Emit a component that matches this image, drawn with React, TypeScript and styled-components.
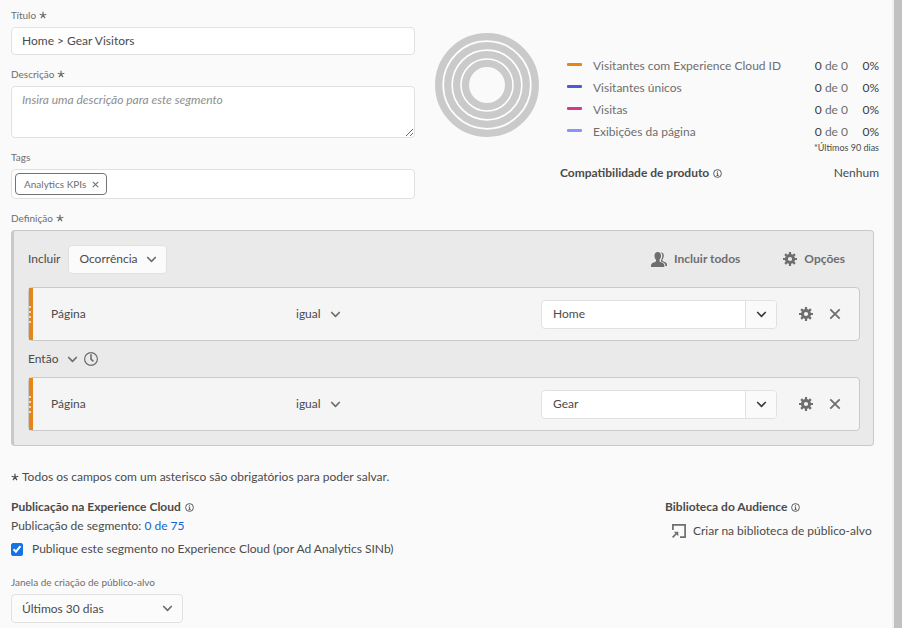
import React, { useState } from 'react';
import styled, { createGlobalStyle } from 'styled-components';

const GlobalStyle = createGlobalStyle`
  *, *::before, *::after { box-sizing: border-box; }
  body {
    margin: 0;
    background: #fafafa;
    color: #4b4b4b;
    font-family: Lato, "Liberation Sans", sans-serif;
    font-size: 12px;
    line-height: 16px;
  }
  button, input, select, textarea { font: inherit; color: inherit; margin: 0; }
`;

const Shell = styled.div`
  display: flex;
  min-height: 100vh;
`;

const Main = styled.main`
  flex: 1;
  min-width: 0;
  padding: 8px 13px 5px 11px;
`;

const ScrollThumb = styled.div`
  flex: none;
  width: 10px;
  background: #c1c1c1;
  border-left: 2px solid #f0f0f0;
`;

const Top = styled.div`
  display: grid;
  grid-template-columns: minmax(0, 1fr) 444px;
  gap: 20px;
`;

const Fields = styled.div`
  display: flex;
  flex-direction: column;
  gap: 12px;
`;

const Field = styled.div`
  display: flex;
  flex-direction: column;
  gap: 5px;
`;

const Label = styled.label`
  display: flex;
  align-items: center;
  gap: 3px;
  font-size: 10px;
  line-height: 14px;
  color: #6e6e6e;
`;

const TextInput = styled.input`
  width: 100%;
  height: 28px;
  padding: 0 10px 1px;
  border: 1px solid #e1e1e1;
  border-radius: 4px;
  background: #fff;
`;

const TextArea = styled.textarea`
  display: block;
  width: 100%;
  height: 52px;
  padding: 5px 10px;
  border: 1px solid #e1e1e1;
  border-radius: 4px;
  background: #fff;
  resize: vertical;
  &::placeholder { color: #8e8e8e; font-style: italic; opacity: 1; }
`;

const TagBox = styled.div`
  display: flex;
  align-items: center;
  height: 30px;
  padding: 0 3px;
  border: 1px solid #e1e1e1;
  border-radius: 4px;
  background: #fff;
`;

const Tag = styled.span`
  display: flex;
  align-items: center;
  gap: 6px;
  height: 22px;
  padding: 0 7px 0 8px;
  border: 1px solid #747474;
  border-radius: 4px;
  font-size: 10px;
  color: #6e6e6e;
  white-space: nowrap;
`;

const TagInput = styled.input`
  flex: 1;
  min-width: 0;
  border: 0;
  outline: 0;
  background: transparent;
`;

const IconButton = styled.button`
  display: inline-flex;
  align-items: center;
  justify-content: center;
  padding: 0;
  border: 0;
  background: none;
  color: #6e6e6e;
  cursor: pointer;
`;

const Stats = styled.section`
  display: grid;
  grid-template-columns: 104px minmax(0, 1fr);
  gap: 21px;
  padding-top: 25px;
  align-items: start;
`;

const StatsInfo = styled.div`
  padding-top: 22px;
`;

const Legend = styled.table`
  width: 100%;
  border-collapse: collapse;
  color: #6e6e6e;
  th, td { height: 22px; padding: 0; font-weight: 400; text-align: left; white-space: nowrap; }
`;

const SwatchCell = styled.td`
  width: 33px;
  && { padding-left: 7px; }
`;

const Swatch = styled.span<{ $color: string }>`
  display: block;
  width: 15px;
  height: 3px;
  border-radius: 1px;
  margin-bottom: 3px;
  background: ${(p) => p.$color};
`;

const CountCell = styled.td`
  && { text-align: right; }
`;

const Strong = styled.span`
  color: #3c3c3c;
`;

const PercentCell = styled.td`
  width: 31px;
  color: #3c3c3c;
  && { text-align: right; }
`;

const Footnote = styled.p`
  margin: 0;
  font-size: 9px;
  line-height: 10px;
  text-align: right;
`;

const Compatibility = styled.div`
  display: flex;
  justify-content: space-between;
  margin-top: 12px;
`;

const Heading = styled.h2`
  display: flex;
  align-items: center;
  gap: 4px;
  margin: 0;
  font-size: 12px;
  line-height: 16px;
  font-weight: 700;
  white-space: nowrap;
`;

const DefinitionField = styled(Field)`
  margin: 12px 5px 0 0;
`;

const Definition = styled.section`
  padding: 14px 13px 14px 14px;
  border: 1px solid #c9c9c9;
  border-left-width: 3px;
  border-radius: 4px;
  background: #eaeaea;
`;

const DefinitionHeader = styled.div`
  display: flex;
  align-items: center;
  height: 28px;
  margin-bottom: 14px;
  gap: 8px;
`;

const Actions = styled.div`
  display: flex;
  align-items: center;
  gap: 43px;
  margin-left: auto;
  padding-right: 15px;
`;

const ActionButton = styled(IconButton)`
  gap: 7px;
  font-weight: 700;
`;

const SelectWrap = styled.span<{ $width?: number; $boxed?: boolean }>`
  display: inline-grid;
  align-items: center;
  width: ${(p) => (p.$width ? `${p.$width}px` : 'auto')};
  height: ${(p) => (p.$boxed ? '29px' : '20px')};
  border: ${(p) => (p.$boxed ? '1px solid #e1e1e1' : '0')};
  border-radius: 4px;
  background: ${(p) => (p.$boxed ? '#fbfbfb' : 'transparent')};
  > * { grid-area: 1 / 1; }
  > svg { justify-self: end; margin-right: ${(p) => (p.$boxed ? '9px' : '0')}; color: #6e6e6e; pointer-events: none; }
  > select { padding-left: ${(p) => (p.$boxed ? '10px' : '0')}; }
`;

const Select = styled.select`
  appearance: none;
  width: 100%;
  height: 100%;
  padding: 0 12px 0 0;
  border: 0;
  background: none;
  cursor: pointer;
`;

const Rule = styled.div`
  display: flex;
  height: 54px;
  border: 1px solid #c9c9c9;
  border-radius: 4px;
  background: #f5f5f5;
`;

const Grip = styled.span`
  display: flex;
  flex-direction: column;
  justify-content: center;
  gap: 3px;
  width: 4px;
  background: #e68619;
`;

const GripDot = styled.span`
  width: 2px;
  height: 2px;
  background: #f8d9b4;
`;

const RuleBody = styled.div`
  flex: 1;
  min-width: 0;
  display: grid;
  grid-template-columns: minmax(0, 1fr) minmax(0, 1fr) 236px auto;
  align-items: center;
  padding: 0 18px;
`;

const RuleActions = styled.div`
  display: flex;
  gap: 16px;
  padding-left: 22px;
`;

const Combo = styled.div`
  display: flex;
  height: 29px;
  border: 1px solid #e1e1e1;
  border-radius: 4px;
  background: #fff;
  overflow: hidden;
`;

const ComboInput = styled.input`
  flex: 1;
  min-width: 0;
  padding: 0 11px 1px;
  border: 0;
  outline: 0;
  background: none;
`;

const ComboButton = styled(IconButton)`
  width: 31px;
  border-left: 1px solid #e1e1e1;
  background: #fafafa;
  color: #3c3c3c;
`;

const Sequence = styled.div`
  display: flex;
  align-items: center;
  gap: 6px;
  height: 36px;
`;

const RequiredNote = styled.p`
  display: flex;
  align-items: center;
  gap: 3px;
  margin: 23px 0 14px;
`;

const Bottom = styled.div`
  display: grid;
  grid-template-columns: minmax(0, 1fr) 214px;
`;

const Paragraph = styled.p`
  margin: 3px 0 7px;
`;

const Link = styled.a`
  color: #0d66d0;
  text-decoration: none;
`;

const CheckRow = styled.label`
  display: flex;
  align-items: center;
  gap: 9px;
`;

const CheckBox = styled.input`
  appearance: none;
  display: grid;
  place-items: center;
  width: 12px;
  height: 13px;
  border: 1px solid #1473e6;
  border-radius: 2px;
  background: #fff;
  &:checked { background: #1473e6; }
`;

const CheckWrap = styled.span`
  display: grid;
  align-items: center;
  > * { grid-area: 1 / 1; }
  > svg { pointer-events: none; }
`;

const WindowField = styled(Field)`
  margin-top: 18px;
`;

const LibraryLink = styled.a`
  display: flex;
  align-items: center;
  gap: 7px;
  margin-top: 8px;
  padding-left: 7px;
  color: inherit;
  text-decoration: none;
  white-space: nowrap;
`;

const Asterisk = () => (
  <svg width="8" height="8" viewBox="0 0 8 8" stroke="currentColor" strokeWidth="1.2" aria-hidden="true">
    <path d="M4 4.2V.8M4 4.2 7.3 3.2M4 4.2 6 7.2M4 4.2 2 7.2M4 4.2.7 3.2" />
  </svg>
);

const Chevron = () => (
  <svg width="11" height="7" viewBox="0 0 11 7" fill="none" stroke="currentColor" strokeWidth="1.7" strokeLinecap="round" strokeLinejoin="round" aria-hidden="true">
    <path d="M1.7 1.5 5.5 5.3 9.3 1.5" />
  </svg>
);

const Cross = ({ size = 12 }: { size?: number }) => (
  <svg width={size} height={size} viewBox="0 0 12 12" stroke="currentColor" strokeWidth="1.8" aria-hidden="true">
    <path d="M1.3 1.3 10.7 10.7M10.7 1.3 1.3 10.7" />
  </svg>
);

const Info = () => (
  <svg width="9" height="9" viewBox="0 0 9 9" fill="none" stroke="currentColor" strokeWidth=".9" aria-hidden="true">
    <circle cx="4.5" cy="4.5" r="3.9" />
    <path d="M3.7 3.9h.9v2.5M3.5 6.5h2.1M4.1 2.4h.9" />
  </svg>
);

const Gear = () => (
  <svg width="14" height="14" viewBox="0 0 14 14" fill="none" stroke="currentColor" aria-hidden="true">
    <circle cx="7" cy="7" r="3.6" strokeWidth="3" />
    <path d="M7 0v3M7 11v3M0 7h3M11 7h3M2.1 2.1l2 2M9.9 9.9l2 2M2.1 11.9l2-2M9.9 4.1l2-2" strokeWidth="2.2" />
  </svg>
);

const People = () => (
  <svg width="16" height="15" viewBox="0 0 16 15" fill="currentColor" aria-hidden="true">
    <path d="M6.8 0C4.6 0 3.5 1.5 3.5 3.7c0 1.8.7 3.3 1.5 4.1v1.3c0 .5-.3.7-.8.9C1.7 10.8 0 11.6 0 13.2V15h13.3v-1.8c0-1.6-1.6-2.4-4-3.2-.5-.2-.8-.4-.8-.9V7.8c.8-.8 1.5-2.3 1.5-4.1C10 1.5 8.9 0 6.8 0Z" />
    <path d="M9.7.3c1.900 0 3.100 1.300 3.100 3.300 0 1.700-.6 3-1.400 3.900v.9c0 .5.2.7.7.8 2.400.8 3.900 1.700 3.900 3.200V14h-1.700v-.8c0-1.900-1.700-2.900-4.300-3.800V8c.8-1.100 1.300-2.600 1.300-4.300 0-1.400-.5-2.600-1.600-3.400Z" />
  </svg>
);

const Clock = () => (
  <svg width="14" height="14" viewBox="0 0 14 14" fill="none" stroke="currentColor" aria-hidden="true">
    <circle cx="7" cy="7" r="6.4" strokeWidth="1.2" />
    <path d="M7 2.2v5l2.400 2.200" strokeWidth="1.6" />
  </svg>
);

const OpenIn = () => (
  <svg width="14" height="14" viewBox="0 0 14 14" fill="none" stroke="#6e6e6e" strokeWidth="1.7" aria-hidden="true">
    <path d="M.9 6V.9h12.200v12.200H8" />
    <path d="M.6 13.400 5 9" />
    <path d="M1.800 7.700h4.500v4.500Z" fill="#6e6e6e" stroke="none" />
  </svg>
);

const Tick = () => (
  <svg width="12" height="12" viewBox="0 0 12 12" fill="none" stroke="#fff" strokeWidth="2" aria-hidden="true">
    <path d="M2.5 6.3 4.9 8.7 9.5 3.2" />
  </svg>
);

const Rings = () => (
  <svg width="104" height="104" viewBox="0 0 104 104" fill="none" stroke="#cacaca" strokeWidth="7.3" aria-hidden="true">
    <circle cx="52" cy="52" r="44" fill="#fff" stroke="none" />
    <circle cx="52" cy="52" r="20" fill="#fafafa" stroke="none" />
    {[48.3, 39.3, 30.4, 21.6].map((r) => (
      <circle key={r} cx="52" cy="52" r={r} />
    ))}
  </svg>
);

const metrics = [
  { name: 'Visitantes com Experience Cloud ID', color: '#e68619' },
  { name: 'Visitantes únicos', color: '#5258d6' },
  { name: 'Visitas', color: '#d83790' },
  { name: 'Exibições da página', color: '#9090fa' },
];

function SegmentRule({ value }: { value: string }) {
  const [text, setText] = useState(value);
  return (
    <Rule>
      <Grip>
        {[0, 1, 2, 3].map((n) => <GripDot key={n} />)}
      </Grip>
      <RuleBody>
        <span>Página</span>
        <div>
          <SelectWrap $width={45}>
            <Select aria-label="Operador"><option>igual</option></Select>
            <Chevron />
          </SelectWrap>
        </div>
        <Combo>
          <ComboInput aria-label="Valor" value={text} onChange={(e) => setText(e.target.value)} />
          <ComboButton type="button" aria-label="Mostrar valores"><Chevron /></ComboButton>
        </Combo>
        <RuleActions>
          <IconButton type="button" aria-label="Configurar regra"><Gear /></IconButton>
          <IconButton type="button" aria-label="Remover regra"><Cross /></IconButton>
        </RuleActions>
      </RuleBody>
    </Rule>
  );
}

export default function App() {
  return (
    <>
      <GlobalStyle />
      <Shell>
        <Main>
          <Top>
            <Fields>
              <Field>
                <Label htmlFor="title">Título <Asterisk /></Label>
                <TextInput id="title" defaultValue="Home > Gear Visitors" />
              </Field>
              <Field>
                <Label htmlFor="description">Descrição <Asterisk /></Label>
                <TextArea id="description" placeholder="Insira uma descrição para este segmento" />
              </Field>
              <Field>
                <Label htmlFor="tags">Tags</Label>
                <TagBox>
                  <Tag>
                    Analytics KPIs
                    <IconButton type="button" aria-label="Remover tag"><Cross size={7} /></IconButton>
                  </Tag>
                  <TagInput id="tags" />
                </TagBox>
              </Field>
            </Fields>
            <Stats>
              <Rings />
              <StatsInfo>
                <Legend>
                  <tbody>
                    {metrics.map((m) => (
                      <tr key={m.name}>
                        <SwatchCell><Swatch $color={m.color} /></SwatchCell>
                        <th scope="row">{m.name}</th>
                        <CountCell><Strong>0</Strong> de 0</CountCell>
                        <PercentCell>0%</PercentCell>
                      </tr>
                    ))}
                  </tbody>
                </Legend>
                <Footnote>*Últimos 90 dias</Footnote>
                <Compatibility>
                  <Heading>Compatibilidade de produto <Info /></Heading>
                  <span>Nenhum</span>
                </Compatibility>
              </StatsInfo>
            </Stats>
          </Top>

          <DefinitionField>
            <Label as="div">Definição <Asterisk /></Label>
            <Definition>
              <DefinitionHeader>
                <label htmlFor="container">Incluir</label>
                <SelectWrap $width={99} $boxed>
                  <Select id="container"><option>Ocorrência</option></Select>
                  <Chevron />
                </SelectWrap>
                <Actions>
                  <ActionButton type="button"><People />Incluir todos</ActionButton>
                  <ActionButton type="button"><Gear />Opções</ActionButton>
                </Actions>
              </DefinitionHeader>
              <SegmentRule value="Home" />
              <Sequence>
                <SelectWrap $width={50}>
                  <Select aria-label="Sequência"><option>Então</option></Select>
                  <Chevron />
                </SelectWrap>
                <IconButton type="button" aria-label="Intervalo de tempo"><Clock /></IconButton>
              </Sequence>
              <SegmentRule value="Gear" />
            </Definition>
          </DefinitionField>

          <RequiredNote>
            <Asterisk /> Todos os campos com um asterisco são obrigatórios para poder salvar.
          </RequiredNote>

          <Bottom>
            <section>
              <Heading>Publicação na Experience Cloud <Info /></Heading>
              <Paragraph>Publicação de segmento: <Link href="#publicacao">0 de 75</Link></Paragraph>
              <CheckRow>
                <CheckWrap>
                  <CheckBox type="checkbox" defaultChecked />
                  <Tick />
                </CheckWrap>
                Publique este segmento no Experience Cloud (por Ad Analytics SINb)
              </CheckRow>
              <WindowField>
                <Label htmlFor="window">Janela de criação de público-alvo</Label>
                <SelectWrap $width={172} $boxed>
                  <Select id="window"><option>Últimos 30 dias</option></Select>
                  <Chevron />
                </SelectWrap>
              </WindowField>
            </section>
            <section>
              <Heading>Biblioteca do Audience <Info /></Heading>
              <LibraryLink href="#biblioteca"><OpenIn />Criar na biblioteca de público-alvo</LibraryLink>
            </section>
          </Bottom>
        </Main>
        <ScrollThumb />
      </Shell>
    </>
  );
}
